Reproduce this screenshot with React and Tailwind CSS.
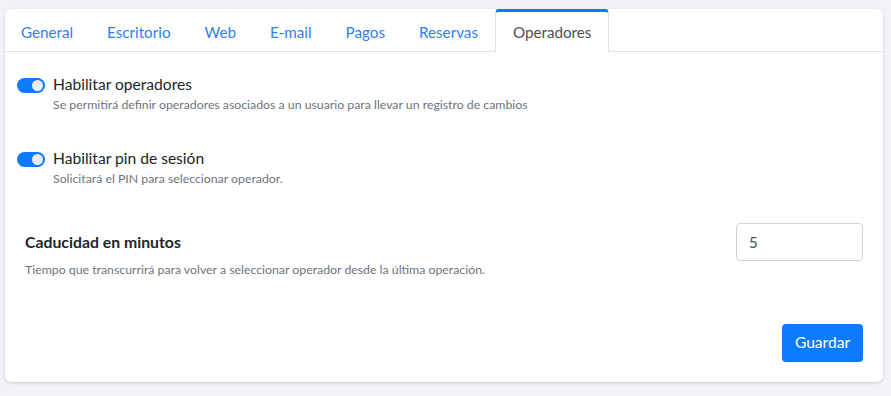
import React, { useState } from 'react';

const tabs = ['General', 'Escritorio', 'Web', 'E-mail', 'Pagos', 'Reservas', 'Operadores'];

function Toggle({ on, onChange }) {
  return (
    <button
      onClick={onChange}
      className={`relative w-[28px] h-[15px] rounded-full shrink-0 ${on ? 'bg-[#0b7bff]' : 'bg-[#dee2e6]'}`}
    >
      <span
        className={`absolute top-[2px] w-[11px] h-[11px] rounded-full bg-[#e9ecf1] ${on ? 'left-[15px]' : 'left-[2px]'}`}
      ></span>
    </button>
  );
}

export default function App() {
  const [active, setActive] = useState('Operadores');
  const [operadores, setOperadores] = useState(true);
  const [pin, setPin] = useState(true);
  const [minutos, setMinutos] = useState('5');

  return (
    <div className="min-h-[396px] bg-[#f2f3f7] pt-[9px] pl-[5px] font-['Lato','Liberation_Sans',sans-serif]">
      <div className="w-[878px] bg-white rounded-[6px] shadow-[0_1px_3px_rgba(0,0,0,0.18)]">
        {/* pestañas */}
        <div className="flex h-[43px] border-b border-[#dee2e6] -ml-[1px]">
          {tabs.map((t) => (
            <button
              key={t}
              onClick={() => setActive(t)}
              className={`px-[17px] text-[15.2px] mb-[-1px] ${
                active === t
                  ? 'text-[#495057] bg-white border-x border-[#dee2e6] border-t-[3px] border-t-[#0b7bff] rounded-t-[4px] pt-[1px] px-[16px]'
                  : 'text-[#2f80ed] pt-[4px]'
              }`}
            >
              {t}
            </button>
          ))}
        </div>

        <div className="pt-[22px] pb-[20px] pr-[20px]">
          {/* habilitar operadores */}
          <div className="pl-[12px]">
            <div className="flex items-center gap-[8px] h-[22px]">
              <Toggle on={operadores} onChange={() => setOperadores(!operadores)} />
              <span className="text-[15.6px] text-[#212529]">Habilitar operadores</span>
            </div>
            <p className="pl-[36px] text-[12.3px] leading-[18px] text-[#6c757d]">
              Se permitirá definir operadores asociados a un usuario para llevar un registro de cambios
            </p>
          </div>

          {/* pin de sesión */}
          <div className="pl-[12px] mt-[34px]">
            <div className="flex items-center gap-[8px] h-[22px]">
              <Toggle on={pin} onChange={() => setPin(!pin)} />
              <span className="text-[15.6px] text-[#212529]">Habilitar pin de sesión</span>
            </div>
            <p className="pl-[36px] text-[12.3px] leading-[18px] text-[#6c757d]">
              Solicitará el PIN para seleccionar operador.
            </p>
          </div>

          {/* caducidad */}
          <div className="pl-[20px] mt-[35px] flex justify-between">
            <div className="pt-[8px]">
              <div className="text-[15.8px] leading-[22px] font-bold text-[#212529]">Caducidad en minutos</div>
              <p className="mt-[8px] text-[12.3px] leading-[18px] text-[#6c757d]">
                Tiempo que transcurrirá para volver a seleccionar operador desde la última operación.
              </p>
            </div>
            <input
              value={minutos}
              onChange={(e) => setMinutos(e.target.value)}
              className="w-[127px] h-[38px] border border-[#ced4da] rounded-[4px] px-[12px] text-[15px] text-[#495057] outline-none"
            />
          </div>

          <div className="flex justify-end mt-[45px]">
            <button className="h-[38px] w-[81px] rounded-[4px] bg-[#0b7bff] text-white text-[15.6px]">
              Guardar
            </button>
          </div>
        </div>
      </div>
    </div>
  );
}
